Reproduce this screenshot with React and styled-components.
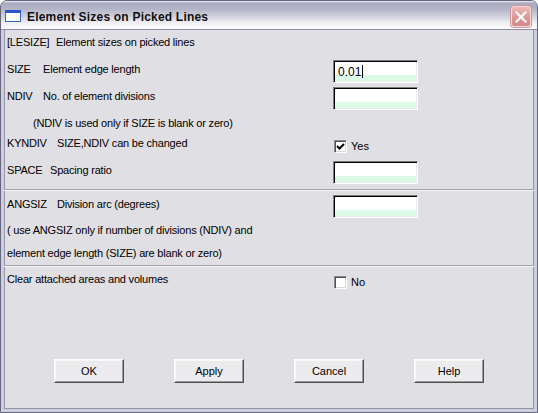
import React from 'react';
import styled, { createGlobalStyle } from 'styled-components';

const Global = createGlobalStyle`
  html, body { margin: 0; padding: 0; background: #ffffff; }
  body { font-family: "Liberation Sans", Arial, sans-serif; }
  * { box-sizing: border-box; }
`;

const Window = styled.div`
  width: 538px;
  height: 413px;
  display: flex;
  flex-direction: column;
  background: #e0dfe3;
  border: 1px solid #66667e;
  border-radius: 7px 7px 0 0;
  overflow: hidden;
`;

const TitleBar = styled.div`
  flex: none;
  height: 29px;
  display: flex;
  align-items: center;
  padding: 1px 6px 0 4px;
  background: linear-gradient(
    to bottom,
    #f4f4f8 0px,
    #a9a9c0 2px,
    #b4b4c8 8px,
    #cfcfdc 15px,
    #ececf2 21px,
    #fbfbfd 27px
  );
  border-bottom: 1px solid #8c8ca4;
`;

const TitleIcon = styled.svg`
  flex: none;
  width: 16px;
  height: 12px;
  margin-right: 6px;
`;

const TitleText = styled.div`
  flex: 1;
  font-size: 12px;
  font-weight: bold;
  letter-spacing: 0.2px;
  color: #101010;
  padding-top: 2px;
`;

const CloseButton = styled.div`
  flex: none;
  width: 20px;
  height: 21px;
  margin-top: 2px;
  border-radius: 3px;
  border: 1px solid #f4d8d8;
  background: linear-gradient(to bottom, #ecb8b8, #dc9494 60%, #d58a8a);
  box-shadow: 0 0 0 1px #c89a9a;
  display: flex;
  align-items: center;
  justify-content: center;
`;

const Body = styled.div`
  flex: 1;
  display: flex;
  flex-direction: column;
  border: 3px solid #cfcfdb;
  border-top: 0;
  box-shadow: inset 1px 0 0 #9494aa, inset -1px 0 0 #9494aa, inset 0 -1px 0 #9494aa;
`;

const Section = styled.div`
  display: flex;
  flex-direction: column;
  padding: ${(p) => p.$pt || 0}px 3px ${(p) => p.$pb || 0}px;
`;

const Separator = styled.div`
  flex: none;
  height: 2px;
  border-top: 1px solid #a4a4a8;
  border-bottom: 1px solid #f4f4f6;
`;

const Row = styled.div`
  display: grid;
  grid-template-columns: 326px 1fr;
  align-items: start;
  margin-top: ${(p) => p.$mt || 0}px;
`;

const Label = styled.div`
  font-size: 11px;
  line-height: 14px;
  letter-spacing: -0.2px;
  color: #000;
  white-space: nowrap;
  padding-top: ${(p) => p.$pt || 0}px;
  padding-left: ${(p) => p.$indent || 0}px;
  margin-top: ${(p) => p.$mt || 0}px;
`;

const Code = styled.span`
  display: inline-block;
  width: ${(p) => p.$w}px;
`;

const TextBox = styled.div`
  width: 85px;
  height: 23px;
  border-style: solid;
  border-width: 1px;
  border-color: #7c7c7c #ffffff #ffffff #7c7c7c;
  box-shadow: inset 1px 1px 0 #000000, inset -1px -1px 0 #ececf0;
  background: linear-gradient(to bottom, #ffffff 0, #ffffff 14px, #dcfbe7 14px);
  display: flex;
  align-items: center;
  padding-left: 4px;
  font-size: 12px;
  color: #000;
`;

const Caret = styled.span`
  display: inline-block;
  width: 1px;
  height: 13px;
  background: #000;
  margin-left: 1px;
`;

const CheckRow = styled.div`
  display: flex;
  align-items: center;
  gap: 4px;
  margin-top: ${(p) => p.$mt || 0}px;
  padding-left: 1px;
  font-size: 11px;
  line-height: 13px;
  color: #000;
`;

const CheckBox = styled.span`
  width: 13px;
  height: 13px;
  border-style: solid;
  border-width: 1px;
  border-color: #8a8a8a #ffffff #ffffff #8a8a8a;
  box-shadow: inset 1px 1px 0 #505050, inset -1px -1px 0 #d8d8dc;
  background: #ffffff;
  display: flex;
  align-items: center;
  justify-content: center;
`;

const ButtonBar = styled.div`
  margin-top: auto;
  display: flex;
  justify-content: center;
  gap: 50px;
  padding-bottom: 26px;
`;

const Button = styled.button`
  width: 70px;
  height: 24px;
  margin: 0;
  padding: 0;
  font-family: "Liberation Sans", Arial, sans-serif;
  font-size: 11px;
  color: #000;
  background: #ececee;
  border: 1px solid;
  border-color: #ffffff #4e4e4e #4e4e4e #ffffff;
  box-shadow: inset -1px -1px 0 #9c9c9c, inset 1px 1px 0 #f8f8f4;
`;

function Field({ value }) {
  return (
    <TextBox>
      {value}
      {value !== undefined && <Caret />}
    </TextBox>
  );
}

function Check({ checked, label, mt }) {
  return (
    <CheckRow $mt={mt}>
      <CheckBox>
        {checked && (
          <svg width="9" height="9" viewBox="0 0 9 9">
            <polyline points="1,4 3.5,6.5 8,2" fill="none" stroke="#000" strokeWidth="2" />
          </svg>
        )}
      </CheckBox>
      {label}
    </CheckRow>
  );
}

export default function App() {
  return (
    <>
      <Global />
      <Window>
        <TitleBar>
          <TitleIcon viewBox="0 0 16 12">
            <rect x="0.5" y="0.5" width="15" height="11" fill="#ffffff" stroke="#3a64c8" />
            <rect x="0" y="0" width="16" height="3" fill="#2a58c8" />
          </TitleIcon>
          <TitleText>Element Sizes on Picked Lines</TitleText>
          <CloseButton>
            <svg width="12" height="12" viewBox="0 0 12 12">
              <path d="M1.5 1.5 L10.5 10.5 M10.5 1.5 L1.5 10.5" stroke="#ffffff" strokeWidth="2.2" strokeLinecap="square" />
            </svg>
          </CloseButton>
        </TitleBar>
        <Body>
          <Section $pt={5} $pb={5}>
            <Label>
              <Code $w={49}>[LESIZE]</Code>Element sizes on picked lines
            </Label>
            <Row $mt={11}>
              <Label $pt={2}>
                <Code $w={36}>SIZE</Code>Element edge length
              </Label>
              <Field value="0.01" />
            </Row>
            <Row $mt={4}>
              <Label $pt={2}>
                <Code $w={36}>NDIV</Code>No. of element divisions
              </Label>
              <Field />
            </Row>
            <Label $mt={6} $indent={26}>
              (NDIV is used only if SIZE is blank or zero)
            </Label>
            <Row $mt={6}>
              <Label>
                <Code $w={50}>KYNDIV</Code>SIZE,NDIV can be changed
              </Label>
              <Check checked label="Yes" mt={4} />
            </Row>
            <Row $mt={8}>
              <Label $pt={2}>
                <Code $w={43}>SPACE</Code>Spacing ratio
              </Label>
              <Field />
            </Row>
          </Section>
          <Separator />
          <Section $pb={5}>
            <Row $mt={4}>
              <Label $pt={2}>
                <Code $w={50}>ANGSIZ</Code>Division arc (degrees)
              </Label>
              <Field />
            </Row>
            <Label $mt={5}>( use ANGSIZ only if number of divisions (NDIV) and</Label>
            <Label $mt={9}>element edge length (SIZE) are blank or zero)</Label>
          </Section>
          <Separator />
          <Section>
            <Row $mt={5}>
              <Label>Clear attached areas and volumes</Label>
              <Check label="No" mt={4} />
            </Row>
          </Section>
          <ButtonBar>
            <Button>OK</Button>
            <Button>Apply</Button>
            <Button>Cancel</Button>
            <Button>Help</Button>
          </ButtonBar>
        </Body>
      </Window>
    </>
  );
}
